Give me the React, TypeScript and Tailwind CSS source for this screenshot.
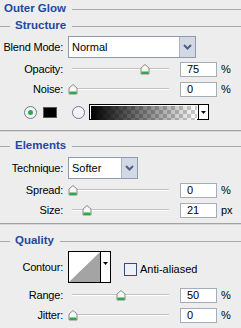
import React from "react";

const font = "font-['Liberation_Sans',Tahoma,sans-serif]";

function Header({ title, indent }: { title: string; indent?: boolean }) {
  return (
    <div className="flex items-center h-[16px]">
      {indent && <div className="w-[10px] h-px bg-[#a9a9a9]" />}
      <span className={`font-bold text-[11.5px] text-[#1e48a0] ${indent ? "ml-[5px]" : "ml-[4px]"}`}>{title}</span>
      <div className="flex-1 h-px bg-[#a9a9a9] ml-[6px]" />
    </div>
  );
}

function Label({ text }: { text: string }) {
  return <div className="w-[64px] shrink-0 text-right text-[11px] text-black pr-[1px] tracking-[-0.2px]">{text}</div>;
}

function Thumb() {
  return (
    <svg width="10" height="11" viewBox="0 0 10 11">
      <path d="M1 4 L5 0.5 L9 4 L9 10 L1 10 Z" fill="#f7f7f7" stroke="#8a8a8a" strokeWidth="1" />
      <rect x="1.5" y="7.5" width="7" height="2.5" fill="#2fa84a" />
    </svg>
  );
}

function SliderRow({ label, pos, value, unit }: { label: string; pos: number; value: string; unit: string }) {
  return (
    <div className="flex items-center h-[15px]">
      <Label text={label} />
      <div className="relative w-[97px] h-[15px] ml-[8px]">
        <div className="absolute left-0 right-0 top-[6px] h-[2px] bg-[#c2c2c2] border-b border-white" />
        <div className="absolute top-[2px]" style={{ left: pos - 5 }}>
          <Thumb />
        </div>
      </div>
      <div className="ml-[11px] w-[37px] h-[15px] bg-white border border-[#a7adb6] text-[11px] leading-[13px] pl-[6px]">{value}</div>
      <span className="ml-[4px] text-[11px]">{unit}</span>
    </div>
  );
}

function Chevron() {
  return (
    <svg width="9" height="6" viewBox="0 0 9 6">
      <path d="M1 1 L4.5 4.5 L8 1" fill="none" stroke="#4d6185" strokeWidth="2" />
    </svg>
  );
}

function Select({ value, width }: { value: string; width: string }) {
  return (
    <div className={`flex ${width} h-[22px] ml-[4px] bg-white border border-[#8c9bb3]`}>
      <div className="flex-1 flex items-center pl-[3px] text-[11px]">{value}</div>
      <div className="w-[16px] flex items-center justify-center bg-[#d2d8e4] border-l border-[#a9b3c5]">
        <Chevron />
      </div>
    </div>
  );
}

function GradientSwatch() {
  return (
    <svg width="106" height="14" viewBox="0 0 106 14">
      <defs>
        <pattern id="chk" width="8" height="8" patternUnits="userSpaceOnUse">
          <rect width="8" height="8" fill="#ffffff" />
          <rect width="4" height="4" fill="#cccccc" />
          <rect x="4" y="4" width="4" height="4" fill="#cccccc" />
        </pattern>
        <linearGradient id="fade" x1="0" x2="1" y1="0" y2="0">
          <stop offset="0" stopColor="#000" stopOpacity="1" />
          <stop offset="1" stopColor="#000" stopOpacity="0" />
        </linearGradient>
      </defs>
      <rect width="106" height="14" fill="url(#chk)" />
      <rect width="106" height="14" fill="url(#fade)" />
    </svg>
  );
}

function Radio({ checked }: { checked?: boolean }) {
  return (
    <div className="w-[13px] h-[13px] rounded-full border border-[#6d7b8e] bg-[#f1f3f6] flex items-center justify-center">
      {checked && <div className="w-[5px] h-[5px] rounded-full bg-[#2fa84a]" />}
    </div>
  );
}

export default function App() {
  return (
    <div className={`w-[241px] h-[328px] bg-[#ededed] overflow-hidden ${font}`}>
      <div className="pt-[1px]">
        <Header title="Outer Glow" />
      </div>
      <div className="mt-[1px]">
        <Header title="Structure" indent />
      </div>

      <div className="flex items-center mt-[2px] h-[22px]">
        <Label text="Blend Mode:" />
        <Select value="Normal" width="w-[128px]" />
      </div>

      <div className="mt-[4px]">
        <SliderRow label="Opacity:" pos={73} value="75" unit="%" />
      </div>
      <div className="mt-[5px]">
        <SliderRow label="Noise:" pos={1} value="0" unit="%" />
      </div>

      <div className="flex items-center mt-[7px] h-[16px]">
        <div className="ml-[24px]">
          <Radio checked />
        </div>
        <div className="ml-[6px] w-[14px] h-[11px] bg-black border border-[#555]" />
        <div className="ml-[15px]">
          <Radio />
        </div>
        <div className="ml-[4px] flex h-[16px] border border-black bg-white">
          <div className="border border-white">
            <GradientSwatch />
          </div>
          <div className="w-[10px] border-l border-black flex items-center justify-center">
            <svg width="5" height="3" viewBox="0 0 5 3">
              <path d="M0 0 L5 0 L2.5 3 Z" fill="#000" />
            </svg>
          </div>
        </div>
      </div>

      <div className="mt-[10px] h-[2px] bg-[#a3a3a3] border-b border-[#d8d8d8]" />

      <div className="mt-[6px]">
        <Header title="Elements" indent />
      </div>

      <div className="flex items-center mt-[3px] h-[22px]">
        <Label text="Technique:" />
        <Select value="Softer" width="w-[70px]" />
      </div>

      <div className="mt-[4px]">
        <SliderRow label="Spread:" pos={1} value="0" unit="%" />
      </div>
      <div className="mt-[5px]">
        <SliderRow label="Size:" pos={15} value="21" unit="px" />
      </div>

      <div className="mt-[5px] h-[2px] bg-[#a3a3a3] border-b border-[#d8d8d8]" />

      <div className="mt-[8px]">
        <Header title="Quality" indent />
      </div>

      <div className="flex items-center mt-[2px] h-[32px]">
        <Label text="Contour:" />
        <div className="ml-[4px] flex h-[32px] border border-black bg-white">
          <svg width="31" height="30" viewBox="0 0 31 30">
            <rect width="31" height="30" fill="#ffffff" />
            <path d="M0 30 L31 0 L31 30 Z" fill="#a4a4a4" />
          </svg>
          <div className="w-[10px] border-l border-black flex justify-center pt-[10px]">
            <svg width="5" height="3" viewBox="0 0 5 3">
              <path d="M0 0 L5 0 L2.5 3 Z" fill="#000" />
            </svg>
          </div>
        </div>
        <div className="self-start mt-[10px] ml-[13px] flex items-center">
          <div className="w-[13px] h-[13px] border border-[#35506f] bg-[#eef1f5]" />
          <span className="ml-[3px] text-[11px]">Anti-aliased</span>
        </div>
      </div>

      <div className="mt-[5px]">
        <SliderRow label="Range:" pos={49} value="50" unit="%" />
      </div>
      <div className="mt-[5px]">
        <SliderRow label="Jitter:" pos={1} value="0" unit="%" />
      </div>
    </div>
  );
}
